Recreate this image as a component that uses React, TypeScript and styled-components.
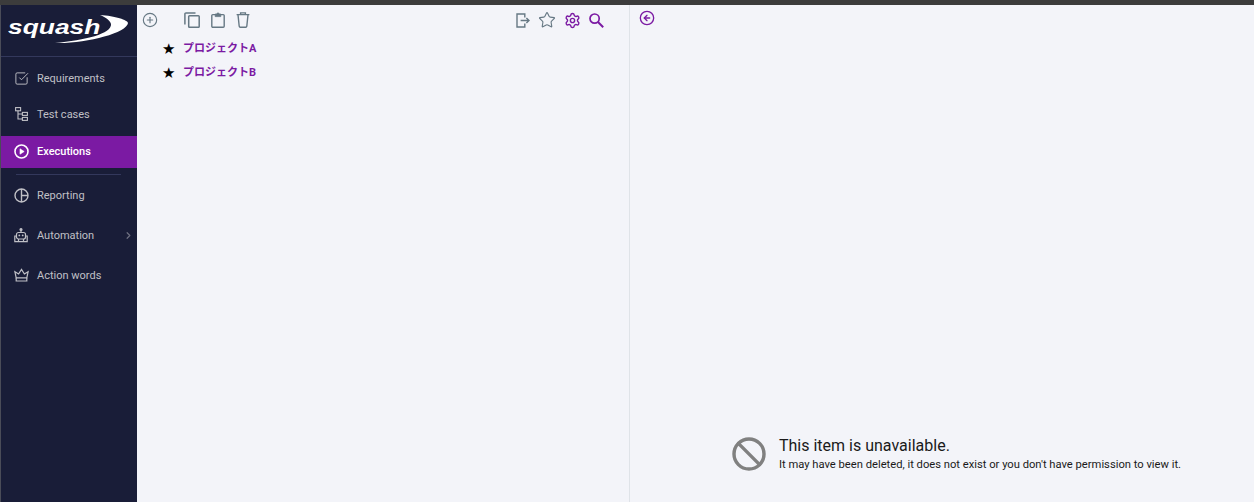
import React from 'react';
import styled, { createGlobalStyle } from 'styled-components';
import {
  Ban,
  ChevronRight,
  CircleArrowLeft,
  CirclePlus,
  Settings,
  SquareCheckBig,
  Star
} from 'lucide-react';

const navy = '#191d38';
const purple = '#7b1aa3';
const slate = '#667884';
const navText = '#c0c0c6';

const GlobalStyle = createGlobalStyle`
  html, body {
    margin: 0;
    height: 100%;
    overflow: hidden;
    background: #f3f4f9;
    font-family: Roboto, "Noto Sans CJK JP", sans-serif;
  }
`;

const TreeIcon = () => (
  <svg width="13" height="14" viewBox="0 0 13 14" fill="none" stroke="currentColor" strokeWidth="1.1">
    <rect x="0.6" y="0.6" width="5" height="3.2" />
    <rect x="7.4" y="5.4" width="5" height="3" />
    <rect x="7.4" y="10.4" width="5" height="3" />
    <path d="M3 3.8V12H7.4M3 7H7.4" />
  </svg>
);

const PlayIcon = () => (
  <svg width="15" height="15" viewBox="0 0 15 15" fill="none" stroke="currentColor" strokeWidth="1.6">
    <circle cx="7.5" cy="7.5" r="6.5" />
    <path d="M6 4.8L10.2 7.5L6 10.2Z" fill="currentColor" strokeWidth="0.6" />
  </svg>
);

const PieIcon = () => (
  <svg width="15" height="15" viewBox="0 0 15 15" fill="none" stroke="currentColor" strokeWidth="1.4">
    <circle cx="7.5" cy="7.5" r="6.5" />
    <path d="M7.5 1V14M7.5 7.5H14" />
  </svg>
);

const RobotIcon = () => (
  <svg width="14" height="15" viewBox="0 0 14 15" fill="none" stroke="currentColor" strokeWidth="1.2">
    <circle cx="7" cy="1.6" r="1" fill="currentColor" />
    <path d="M7 2.5V4.5" />
    <rect x="2.5" y="4.5" width="9" height="6.5" rx="2" />
    <circle cx="5.3" cy="7.4" r="0.9" fill="currentColor" stroke="none" />
    <circle cx="8.7" cy="7.4" r="0.9" fill="currentColor" stroke="none" />
    <path d="M2.5 8H0.8V13.6H13.2V8H11.5M4.5 11V13.6M9.5 11V13.6" />
  </svg>
);

const CrownIcon = () => (
  <svg width="15" height="14" viewBox="0 0 15 14" fill="none" stroke="currentColor" strokeWidth="1.2">
    <path d="M2.2 9.8L0.9 3.8L4.6 6L7.5 1.4L10.4 6L14.1 3.8L12.8 9.8Z" />
    <path d="M2.2 9.8V13H12.8V9.8" />
  </svg>
);

const CopyIcon = () => (
  <svg width="16" height="16" viewBox="0 0 16 16" fill="none" stroke={slate} strokeWidth="1.5">
    <rect x="4.7" y="3.7" width="10.5" height="11.6" rx="0.8" />
    <path d="M11.5 0.9H2A1.1 1.1 0 0 0 0.9 2V12.5" />
  </svg>
);

const ClipboardIcon = () => (
  <svg width="14" height="16" viewBox="0 0 14 16" fill="none" stroke={slate} strokeWidth="1.4">
    <rect x="0.8" y="2.6" width="12.4" height="12.6" rx="1" />
    <path d="M4.2 4.6V2H5.8C5.9 0.5 8.1 0.5 8.2 2H9.8V4.6Z" fill={slate} strokeWidth="0.8" />
  </svg>
);

const TrashIcon = () => (
  <svg width="14" height="16" viewBox="0 0 14 16" fill="none" stroke={slate} strokeWidth="1.4">
    <path d="M0.6 2.6H13.4M4.6 2.4V0.9H9.4V2.4" />
    <path d="M2 2.8L3.2 14.2C3.3 14.8 3.6 15.2 4.2 15.2H9.8C10.4 15.2 10.7 14.8 10.8 14.2L12 2.8" />
  </svg>
);

const ExitIcon = () => (
  <svg width="14" height="15" viewBox="0 0 14 15" fill="none" stroke={slate} strokeWidth="1.4">
    <path d="M8.8 4.4V1H1V14H8.8V10.6" />
    <path d="M4.6 7.5H13M10.4 5L13 7.5L10.4 10" />
  </svg>
);

const SearchIcon = () => (
  <svg width="15" height="15" viewBox="0 0 15 15" fill="none" stroke={purple} strokeWidth="1.7">
    <circle cx="5.6" cy="5.6" r="4.6" />
    <path d="M9 9L14.2 14.2" strokeWidth="2" />
  </svg>
);

const menu = [
  { label: 'Requirements', icon: <SquareCheckBig size={15} strokeWidth={1.5} />, gap: 4 },
  { label: 'Test cases', icon: <TreeIcon />, gap: 6 },
  { label: 'Executions', icon: <PlayIcon />, active: true, gap: 0 }
];

const lowerMenu = [
  { label: 'Reporting', icon: <PieIcon /> },
  { label: 'Automation', icon: <RobotIcon />, more: true },
  { label: 'Action words', icon: <CrownIcon /> }
];

export default function App() {
  return (
    <>
      <GlobalStyle />
      <Page>
        <TopStrip />
        <Body>
          <Sidebar>
            <LogoBox>
              <Swoosh width="122" height="34" viewBox="0 0 122 34">
                <path d="M92 1C107 2 120 6 120 9C119 19 77 30 47 29C77 26 104 20 103 10C102 6 97 3 92 1Z" fill="#fff" />
              </Swoosh>
              <LogoText>squash</LogoText>
            </LogoBox>
            <Menu>
              {menu.map(item => (
                <MenuItem key={item.label} $active={item.active} $gap={item.gap}>
                  <MenuIcon>{item.icon}</MenuIcon>
                  {item.label}
                </MenuItem>
              ))}
              <MenuRule />
              <LowerMenu>
                {lowerMenu.map(item => (
                  <MenuItem key={item.label} $gap={0}>
                    <MenuIcon>{item.icon}</MenuIcon>
                    {item.label}
                    {item.more && (
                      <MenuArrow>
                        <ChevronRight size={11} strokeWidth={2.6} />
                      </MenuArrow>
                    )}
                  </MenuItem>
                ))}
              </LowerMenu>
            </Menu>
          </Sidebar>

          <TreePane>
            <Toolbar>
              <ToolGroup>
                <CirclePlus size={16} strokeWidth={1.7} color={slate} />
              </ToolGroup>
              <EditTools>
                <CopyIcon />
                <ClipboardIcon />
                <TrashIcon />
              </EditTools>
              <RightTools>
                <ExitIcon />
                <Star size={18} strokeWidth={1.5} color={slate} />
                <Settings size={17} strokeWidth={2} color={purple} />
                <SearchIcon />
              </RightTools>
            </Toolbar>
            <ProjectList>
              {['プロジェクトA', 'プロジェクトB'].map(name => (
                <ProjectRow key={name}>
                  <ProjectStar>★</ProjectStar>
                  <ProjectName>{name}</ProjectName>
                </ProjectRow>
              ))}
            </ProjectList>
          </TreePane>

          <DetailPane>
            <BackRow>
              <CircleArrowLeft size={16} strokeWidth={2} color={purple} />
            </BackRow>
            <Notice>
              <Ban size={36} strokeWidth={2.3} color="#808080" />
              <NoticeText>
                <NoticeTitle>This item is unavailable.</NoticeTitle>
                <NoticeBody>It may have been deleted, it does not exist or you don't have permission to view it.</NoticeBody>
              </NoticeText>
            </Notice>
          </DetailPane>
        </Body>
      </Page>
    </>
  );
}

const Page = styled.div`
  display: flex;
  flex-direction: column;
  width: 1254px;
  height: 502px;
`;

const TopStrip = styled.div`
  height: 5px;
  flex: none;
  background: #3c3c3c;
`;

const Body = styled.div`
  display: flex;
  flex: 1;
  min-height: 0;
`;

const Sidebar = styled.nav`
  width: 136px;
  flex: none;
  background: ${navy};
  border-left: 1px solid #4a4c58;
`;

const LogoBox = styled.div`
  position: relative;
  height: 52px;
  box-sizing: border-box;
  padding: 12px 0 0 7px;
  border-bottom: 1px solid #33385c;
`;

const Swoosh = styled.svg`
  position: absolute;
  top: 9px;
  left: 7px;
`;

const LogoText = styled.div`
  position: relative;
  font-family: "Liberation Sans", sans-serif;
  font-size: 20px;
  font-style: italic;
  font-weight: 700;
  line-height: 20px;
  color: #fff;
  transform: scaleX(1.32);
  transform-origin: left center;
`;

const Menu = styled.div`
  padding-top: 5px;
`;

const LowerMenu = styled.div`
  display: flex;
  flex-direction: column;
  gap: 8px;
`;

const MenuItem = styled.div<{ $active?: boolean; $gap: number }>`
  display: flex;
  align-items: center;
  box-sizing: border-box;
  height: 32px;
  margin-bottom: ${p => p.$gap}px;
  padding-left: 12px;
  padding-bottom: ${p => (p.$active ? 1 : 0)}px;
  font-size: 11px;
  font-weight: ${p => (p.$active ? 500 : 400)};
  color: ${p => (p.$active ? '#fff' : navText)};
  background: ${p => (p.$active ? purple : 'transparent')};
`;

const MenuIcon = styled.span`
  display: flex;
  align-items: center;
  justify-content: center;
  width: 16px;
  margin-right: 8px;
`;

const MenuArrow = styled.span`
  display: flex;
  margin-left: auto;
  padding-right: 3px;
  color: #6e7080;
`;

const MenuRule = styled.div`
  height: 1px;
  margin: 6px 16px 4px 15px;
  background: #33385c;
`;

const TreePane = styled.section`
  width: 493px;
  flex: none;
  box-sizing: border-box;
  border-right: 1px solid #dfe3e8;
`;

const Toolbar = styled.div`
  display: flex;
  align-items: center;
  height: 30px;
  padding-left: 5px;
`;

const ToolGroup = styled.div`
  display: flex;
  width: 42px;
`;

const EditTools = styled.div`
  display: flex;
  gap: 11px;
`;

const RightTools = styled.div`
  display: flex;
  align-items: center;
  gap: 8px;
  margin-left: auto;
  padding-right: 25px;
`;

const ProjectList = styled.div`
  display: flex;
  flex-direction: column;
  gap: 3px;
  padding: 1px 0 0 25px;
`;

const ProjectRow = styled.div`
  display: flex;
  align-items: center;
  height: 21px;
`;

const ProjectStar = styled.span`
  width: 21px;
  padding-top: 6px;
  font-family: "DejaVu Sans", sans-serif;
  font-size: 15px;
  line-height: 21px;
  color: #000;
`;

const ProjectName = styled.span`
  font-family: Roboto, "Noto Sans CJK JP", sans-serif;
  font-size: 11px;
  font-weight: 700;
  color: ${purple};
`;

const DetailPane = styled.section`
  display: flex;
  flex: 1;
  flex-direction: column;
`;

const BackRow = styled.div`
  display: flex;
  padding: 5px 0 0 9px;
`;

const Notice = styled.div`
  display: flex;
  align-items: center;
  gap: 12px;
  margin-top: auto;
  margin-bottom: 30px;
  padding-left: 101px;
`;

const NoticeText = styled.div`
  display: flex;
  flex-direction: column;
`;

const NoticeTitle = styled.div`
  font-size: 16px;
  line-height: 19px;
  color: #1a1a1a;
`;

const NoticeBody = styled.div`
  margin-top: 3px;
  font-size: 11.2px;
  line-height: 14px;
  color: #1a1a1a;
`;
